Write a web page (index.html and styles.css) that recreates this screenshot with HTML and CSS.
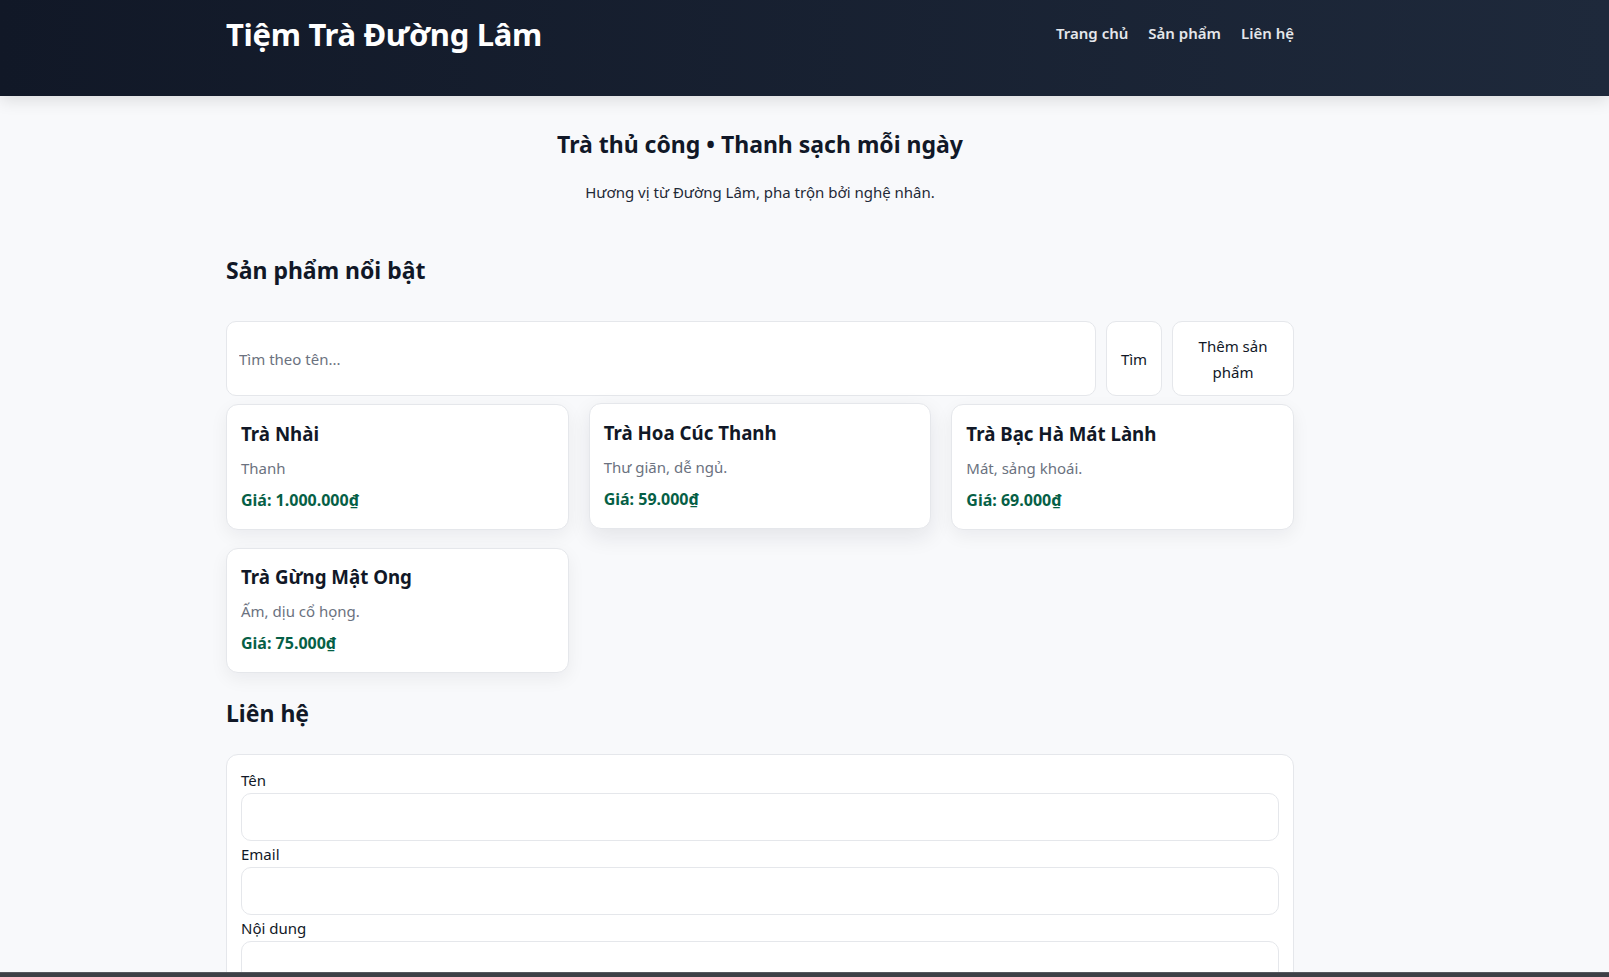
FILE: index.html
```html
<!DOCTYPE html>
<html lang="vi">
<head>
<meta charset="utf-8">
<title>Tiệm Trà Đường Lâm</title>
<link rel="stylesheet" href="styles.css">
</head>
<body>
<header class="site-header">
  <div class="container header-inner">
    <h1 class="brand">Tiệm Trà Đường Lâm</h1>
    <nav class="nav">
      <a href="#">Trang chủ</a>
      <a href="#">Sản phẩm</a>
      <a href="#">Liên hệ</a>
    </nav>
  </div>
</header>
<main class="container">
  <section class="hero">
    <h2 class="hero-title">Trà thủ công • Thanh sạch mỗi ngày</h2>
    <p class="hero-sub">Hương vị từ Đường Lâm, pha trộn bởi nghệ nhân.</p>
  </section>
  <section class="products">
    <h2 class="section-title">Sản phẩm nổi bật</h2>
    <div class="toolbar">
      <input class="search" type="text" placeholder="Tìm theo tên...">
      <button class="btn btn-find">Tìm</button>
      <button class="btn btn-add">Thêm sản phẩm</button>
    </div>
    <div class="grid">
      <article class="card">
        <h3 class="card-title">Trà Nhài</h3>
        <p class="card-desc">Thanh</p>
        <p class="card-price">Giá: 1.000.000₫</p>
      </article>
      <article class="card card-raised">
        <h3 class="card-title">Trà Hoa Cúc Thanh</h3>
        <p class="card-desc">Thư giãn, dễ ngủ.</p>
        <p class="card-price">Giá: 59.000₫</p>
      </article>
      <article class="card">
        <h3 class="card-title">Trà Bạc Hà Mát Lành</h3>
        <p class="card-desc">Mát, sảng khoái.</p>
        <p class="card-price">Giá: 69.000₫</p>
      </article>
      <article class="card card-compact">
        <h3 class="card-title">Trà Gừng Mật Ong</h3>
        <p class="card-desc">Ấm, dịu cổ họng.</p>
        <p class="card-price">Giá: 75.000₫</p>
      </article>
    </div>
  </section>
  <section class="contact">
    <h2 class="section-title contact-title">Liên hệ</h2>
    <form class="contact-card">
      <label class="label">Tên</label>
      <input class="field" type="text">
      <label class="label">Email</label>
      <input class="field" type="email">
      <label class="label">Nội dung</label>
      <textarea class="field area"></textarea>
    </form>
  </section>
</main>
<div class="bottom-bar"></div>
</body>
</html>
```
FILE: styles.css
```css
* { box-sizing: border-box; }
html, body { margin: 0; padding: 0; }
body {
  background: #f8f9fb;
  color: #111827;
  font-family: "Noto Sans", "Open Sans", sans-serif;
  font-size: 15px;
  line-height: 1.6;
  overflow: hidden;
  height: 977px;
}
.container {
  width: 1068px;
  margin-left: 226px;
}
.site-header {
  background: linear-gradient(90deg, #111827 0%, #1e293b 100%);
  height: 96px;
  box-shadow: 0 4px 16px rgba(0, 0, 0, 0.12);
  position: relative;
  z-index: 1;
}
.header-inner {
  display: flex;
  justify-content: space-between;
  align-items: flex-start;
  padding-top: 13px;
}
.brand {
  margin: 0;
  color: #ffffff;
  font-size: 31px;
  font-weight: 700;
  line-height: 42px;
  letter-spacing: -0.3px;
}
.nav {
  display: flex;
  gap: 20px;
  padding-top: 8px;
}
.nav a {
  color: #e5e7eb;
  text-decoration: none;
  font-size: 15px;
  font-weight: 600;
  line-height: 24px;
}
.hero {
  text-align: center;
  padding-top: 33px;
}
.hero-title {
  margin: 0;
  font-size: 23px;
  font-weight: 700;
  line-height: 30px;
}
.hero-sub {
  margin: 20px 0 0;
  font-size: 15px;
  line-height: 26px;
  color: #1f2937;
}
.section-title {
  margin: 50px 0 0;
  font-size: 23px;
  font-weight: 700;
  line-height: 30px;
}
.toolbar {
  display: flex;
  gap: 10px;
  margin-top: 36px;
  height: 75px;
}
.search {
  flex: 1;
  border: 1px solid #e5e7eb;
  border-radius: 10px;
  background: #fff;
  padding: 0 12px;
  font: inherit;
  font-size: 15px;
  color: #111827;
}
.search::placeholder { color: #6b7280; }
.btn {
  border: 1px solid #e5e7eb;
  border-radius: 10px;
  background: #fff;
  font: inherit;
  font-size: 15px;
  line-height: 26px;
  color: #111827;
  padding: 10px 13px;
}
.btn-find { width: 56px; }
.btn-add { width: 122px; }
.grid {
  display: grid;
  grid-template-columns: repeat(3, 1fr);
  column-gap: 20px;
  row-gap: 18px;
  margin-top: 8px;
}
.card {
  background: #fff;
  border: 1px solid #e5e7eb;
  border-radius: 12px;
  padding: 16px 14px 17px;
  box-shadow: 0 6px 18px rgba(17, 24, 39, 0.06);
}
.card-raised {
  transform: translateY(-1px);
  box-shadow: 0 8px 22px rgba(17, 24, 39, 0.09);
}
.card-compact {
  padding-top: 15px;
  padding-bottom: 17px;
}
.card-title {
  margin: 0;
  font-size: 18.7px;
  font-weight: 700;
  line-height: 26px;
}
.card-desc {
  margin: 9px 0 0;
  color: #6b7280;
  font-size: 15px;
  line-height: 24px;
}
.card-price {
  margin: 8px 0 0;
  color: #065f46;
  font-weight: 700;
  font-size: 16px;
  line-height: 24px;
}
.contact-title {
  margin-top: 25px;
}
.contact-card {
  margin-top: 26px;
  background: #fff;
  border: 1px solid #e5e7eb;
  border-radius: 12px;
  padding: 12px 14px 20px;
  display: flex;
  flex-direction: column;
}
.label {
  font-size: 15px;
  line-height: 26px;
  color: #111827;
}
.field {
  height: 48px;
  border: 1px solid #e5e7eb;
  border-radius: 10px;
  background: #fff;
  font: inherit;
  padding: 0 12px;
}
.area {
  height: 100px;
  resize: none;
}
.bottom-bar {
  position: fixed;
  left: 0;
  right: 0;
  bottom: 0;
  height: 5px;
  background: #3d4046;
  border-top: 1px solid #55585e;
  z-index: 5;
}
```
